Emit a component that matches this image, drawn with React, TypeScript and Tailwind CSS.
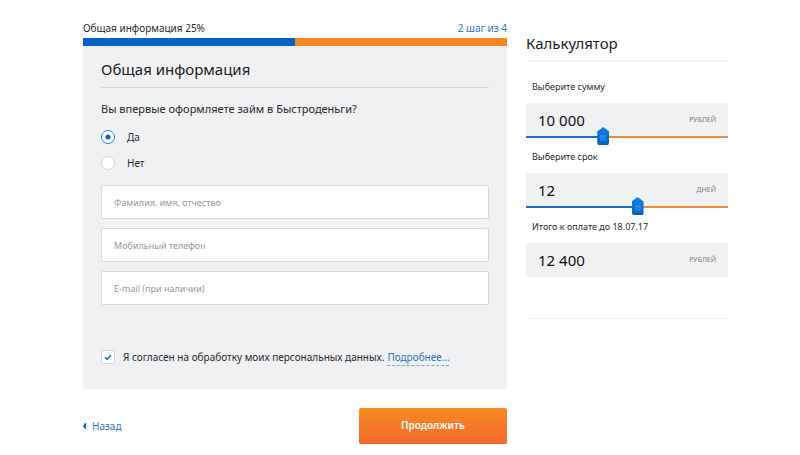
import { useState } from "react";

function ProgressHeader() {
  return (
    <div>
      <div className="flex items-center justify-between text-[10px] leading-5">
        <span>Общая информация 25%</span>
        <span className="text-[#2f74c4]">2 шаг из 4</span>
      </div>
      <div className="flex h-2 bg-[#f78821]" role="progressbar" aria-label="Шаг анкеты" aria-valuemin={0} aria-valuemax={4} aria-valuenow={2}>
        <div className="w-1/2 bg-[#0264c8]" />
      </div>
    </div>
  );
}

function RadioOption({ label, checked, onSelect }: { label: string; checked: boolean; onSelect: () => void }) {
  return (
    <label className="flex items-center gap-3 text-[10px] leading-4">
      <input
        type="radio"
        name="first-loan"
        checked={checked}
        onChange={onSelect}
        className="size-[14px] appearance-none rounded-full border border-[#d5d7d9] bg-white checked:border-[#2f86dc] checked:bg-[radial-gradient(circle,#0264c8_2px,#ffffff_3px)]"
      />
      {label}
    </label>
  );
}

function TextField({ label, type }: { label: string; type: string }) {
  return (
    <input
      type={type}
      aria-label={label}
      placeholder={label}
      className="h-[34px] w-full rounded-xs border border-[#d6d8da] bg-white px-3 text-[9px] outline-none placeholder:text-[#989898] focus:border-[#2f80d0]"
    />
  );
}

type AmountProps = {
  id: string;
  label: string;
  unit: string;
  value: number;
  min: number;
  max: number;
  step: number;
  onChange: (value: number) => void;
};

function format(value: number) {
  return String(value).replace(/\B(?=(\d{3})+$)/g, " ");
}

function AmountSlider({ id, label, unit, value, min, max, step, onChange }: AmountProps) {
  const percent = ((value - min) / (max - min)) * 100;
  return (
    <div>
      <label htmlFor={id} className="block px-[6px] text-[9px] leading-4">
        {label}
      </label>
      <div className="relative mt-2 flex h-[34px] items-center justify-between rounded-t-xs bg-[#f0f1f3] px-3">
        <input
          id={id}
          type="text"
          inputMode="numeric"
          value={format(value)}
          onChange={(e) => onChange(Number(e.target.value.replace(/\D/g, "")))}
          className="w-24 bg-transparent text-[15px] leading-6 text-[#111111] outline-none"
        />
        <span className="text-[7px] text-[#77797c]">{unit}</span>
        <input
          type="range"
          aria-label={label}
          min={min}
          max={max}
          step={step}
          value={value}
          onChange={(e) => onChange(Number(e.target.value))}
          style={{ backgroundImage: `linear-gradient(to right, #1b6fc8 ${percent}%, #f08a3a ${percent}%)` }}
          className="absolute inset-x-0 -bottom-2 h-[18px] w-full cursor-pointer appearance-none bg-transparent bg-[length:100%_2px] bg-[position:0_9px] bg-no-repeat [&::-webkit-slider-thumb]:h-[18px] [&::-webkit-slider-thumb]:w-3 [&::-webkit-slider-thumb]:appearance-none [&::-webkit-slider-thumb]:rounded-xs [&::-webkit-slider-thumb]:bg-[linear-gradient(#2f8ae0,#1c78d6),linear-gradient(#0b82e6,#0560c4)] [&::-webkit-slider-thumb]:bg-[length:6px_6px,100%_100%] [&::-webkit-slider-thumb]:bg-[position:3px_8px,0_0] [&::-webkit-slider-thumb]:bg-no-repeat [&::-webkit-slider-thumb]:[clip-path:polygon(50%_0,100%_25%,100%_100%,0_100%,0_25%)]"
        />
      </div>
    </div>
  );
}

function Calculator() {
  const [sum, setSum] = useState(10000);
  const [days, setDays] = useState(12);
  const total = sum + sum * days * 0.02;

  return (
    <aside className="pt-[13px]">
      <h2 className="border-b border-[#f0f1f2] pb-[5px] text-[15px] leading-6 text-[#1c1c1c]">Калькулятор</h2>
      <div className="mt-[18px] flex flex-col gap-3">
        <AmountSlider id="sum" label="Выберите сумму" unit="РУБЛЕЙ" value={sum} min={1000} max={25000} step={1000} onChange={setSum} />
        <AmountSlider id="days" label="Выберите срок" unit="ДНЕЙ" value={days} min={7} max={16} step={1} onChange={setDays} />
        <div>
          <label htmlFor="total" className="block px-[6px] text-[9px] leading-4">
            Итого к оплате до 18.07.17
          </label>
          <div className="mt-2 flex h-[34px] items-center justify-between rounded-xs bg-[#f0f1f3] px-3">
            <output id="total" className="text-[15px] leading-6 text-[#111111]">
              {format(total)}
            </output>
            <span className="text-[7px] text-[#77797c]">РУБЛЕЙ</span>
          </div>
        </div>
      </div>
      <hr className="mt-[41px] border-[#f0f1f2]" />
    </aside>
  );
}

export default function App() {
  const [first, setFirst] = useState(true);
  const [agreed, setAgreed] = useState(true);

  return (
    <main className="grid grid-cols-[424fr_202fr] items-start gap-[19px] bg-white pt-[18px] pr-[72px] pl-[83px] font-['Noto_Sans','Open_Sans',sans-serif] text-[#2a2a2a]">
      <form onSubmit={(e) => e.preventDefault()}>
        <ProgressHeader />
        <section className="bg-[#f0f1f3] px-[18px] pt-[11px] pb-6">
          <h1 className="border-b border-[#d5d6d8] pb-[6px] text-[15px] leading-6 text-[#1c1c1c]">Общая информация</h1>
          <fieldset className="mt-[11px]">
            <legend className="text-[11px] leading-5">Вы впервые оформляете займ в Быстроденьги?</legend>
            <div className="mt-[10px] flex flex-col gap-[10px]">
              <RadioOption label="Да" checked={first} onSelect={() => setFirst(true)} />
              <RadioOption label="Нет" checked={!first} onSelect={() => setFirst(false)} />
            </div>
          </fieldset>
          <div className="mt-[14px] flex flex-col gap-[9px]">
            <TextField label="Фамилия, имя, отчество" type="text" />
            <TextField label="Мобильный телефон" type="tel" />
            <TextField label="E-mail (при наличии)" type="email" />
          </div>
          <div className="mt-11 flex items-center text-[10px] leading-4">
            <label className="flex items-center gap-2">
              <span className="grid">
                <input
                  type="checkbox"
                  checked={agreed}
                  onChange={(e) => setAgreed(e.target.checked)}
                  className="peer col-start-1 row-start-1 size-[14px] appearance-none rounded-xs border border-[#d5d7d9] bg-white"
                />
                <svg viewBox="0 0 14 14" className="pointer-events-none invisible col-start-1 row-start-1 size-[14px] peer-checked:visible" fill="none" stroke="#0264c8" strokeWidth="1.5">
                  <path d="M4 7.2 6.1 9.2 10 5.2" />
                </svg>
              </span>
              Я согласен на обработку моих персональных данных.
            </label>
            <a href="#details" className="ml-[3px] text-[#2f74c4] underline decoration-[#6fa6dc] decoration-dashed decoration-1 underline-offset-4">
              Подробнее...
            </a>
          </div>
        </section>
        <div className="mt-[19px] flex items-center justify-between">
          <a href="#back" className="flex items-center gap-[6px] text-[10px] leading-4 text-[#2f74c4]">
            <svg viewBox="0 0 3 6" className="h-[6px] w-[3px]" fill="#0264c8">
              <path d="M3 0v6L2 6L0 3L2 0z" />
            </svg>
            Назад
          </a>
          <button type="submit" className="h-9 w-[35%] rounded-xs border-b border-[#f05a1c] bg-linear-to-b from-[#f88a22] to-[#f26a2a] text-[10px] font-semibold text-white">
            Продолжить
          </button>
        </div>
      </form>
      <Calculator />
    </main>
  );
}
